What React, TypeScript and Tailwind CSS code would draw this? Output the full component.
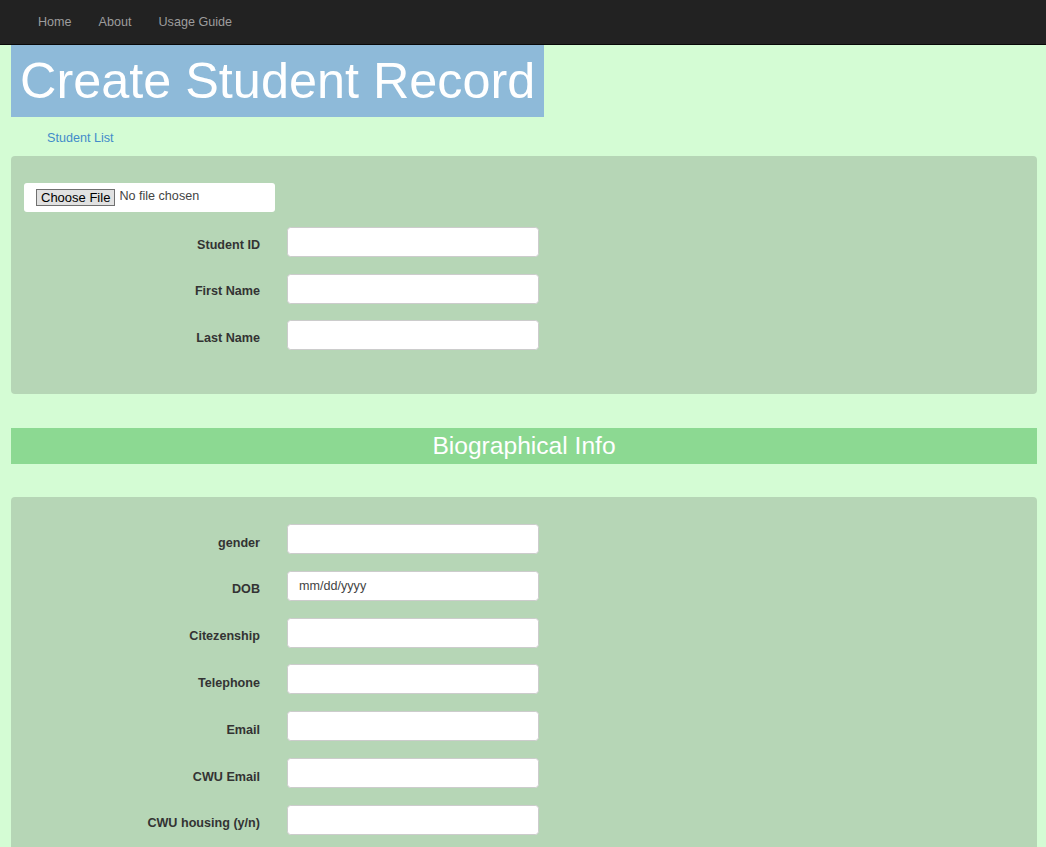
export default function App() {
  const topFields = ["Student ID", "First Name", "Last Name"];
  const bioFields = [
    { label: "gender" },
    { label: "DOB", placeholder: "mm/dd/yyyy" },
    { label: "Citezenship" },
    { label: "Telephone" },
    { label: "Email" },
    { label: "CWU Email" },
    { label: "CWU housing (y/n)" },
  ];

  return (
    <div className="min-h-screen w-full bg-[#d4fcd4] font-['Liberation_Sans',Arial,sans-serif] text-[12.6px] text-[#333]">
      <nav className="h-[45px] bg-[#222] border-b border-[#080808] flex items-center pl-[38px] gap-[27px]">
        <a className="text-[#9d9d9d]">Home</a>
        <a className="text-[#9d9d9d]">About</a>
        <a className="text-[#9d9d9d]">Usage Guide</a>
      </nav>

      <div className="pl-[11px] pr-[9px]">
        <div className="inline-block bg-[#8ebad9] h-[72px] pl-[9px] pr-[9px]">
          <h1 className="text-[50.4px] leading-[72px] text-white">Create Student Record</h1>
        </div>

        <div className="h-[39px] flex items-center pl-[36px] pt-[4px]">
          <a className="text-[#428bca]">Student List</a>
        </div>

        <div className="bg-[#b6d6b6] rounded-[4px] pt-[27px] pb-[44px] px-[13px]">
          <div className="w-[251px] h-[29px] bg-white rounded-[3px] flex items-center pl-[12px]">
            <span className="h-[17px] px-[4px] bg-[#e1e1e1] border border-[#707070] text-black text-[13px] leading-[15px]">
              Choose File
            </span>
            <span className="ml-[4px] text-[#444] text-[12.6px] -mt-[3px]">No file chosen</span>
          </div>
          <div className="mt-[15px] flex flex-col gap-[16.5px]">
            {topFields.map((f) => (
              <div key={f} className="flex items-center">
                <label className="w-[236px] text-right font-bold pt-[6px]">{f}</label>
                <input
                  type="text"
                  className="ml-[27px] w-[252px] h-[30px] bg-white border border-[#ccc] rounded-[3.6px]"
                />
              </div>
            ))}
          </div>
        </div>

        <div className="mt-[34px] h-[36px] bg-[#8cd992] flex items-center justify-center text-white text-[24.6px]">
          Biographical Info
        </div>

        <div className="mt-[33px] bg-[#b6d6b6] rounded-[4px] pt-[27px] pb-[43px] px-[13px]">
          <div className="flex flex-col gap-[16.8px]">
            {bioFields.map((f) => (
              <div key={f.label} className="flex items-center">
                <label className="w-[236px] text-right font-bold pt-[8px]">{f.label}</label>
                <input
                  type="text"
                  placeholder={f.placeholder}
                  className="ml-[27px] w-[252px] h-[30px] bg-white border border-[#ccc] rounded-[3.6px] px-[11px] text-[12.6px] placeholder:text-[#444]"
                />
              </div>
            ))}
          </div>
        </div>
      </div>
    </div>
  );
}
